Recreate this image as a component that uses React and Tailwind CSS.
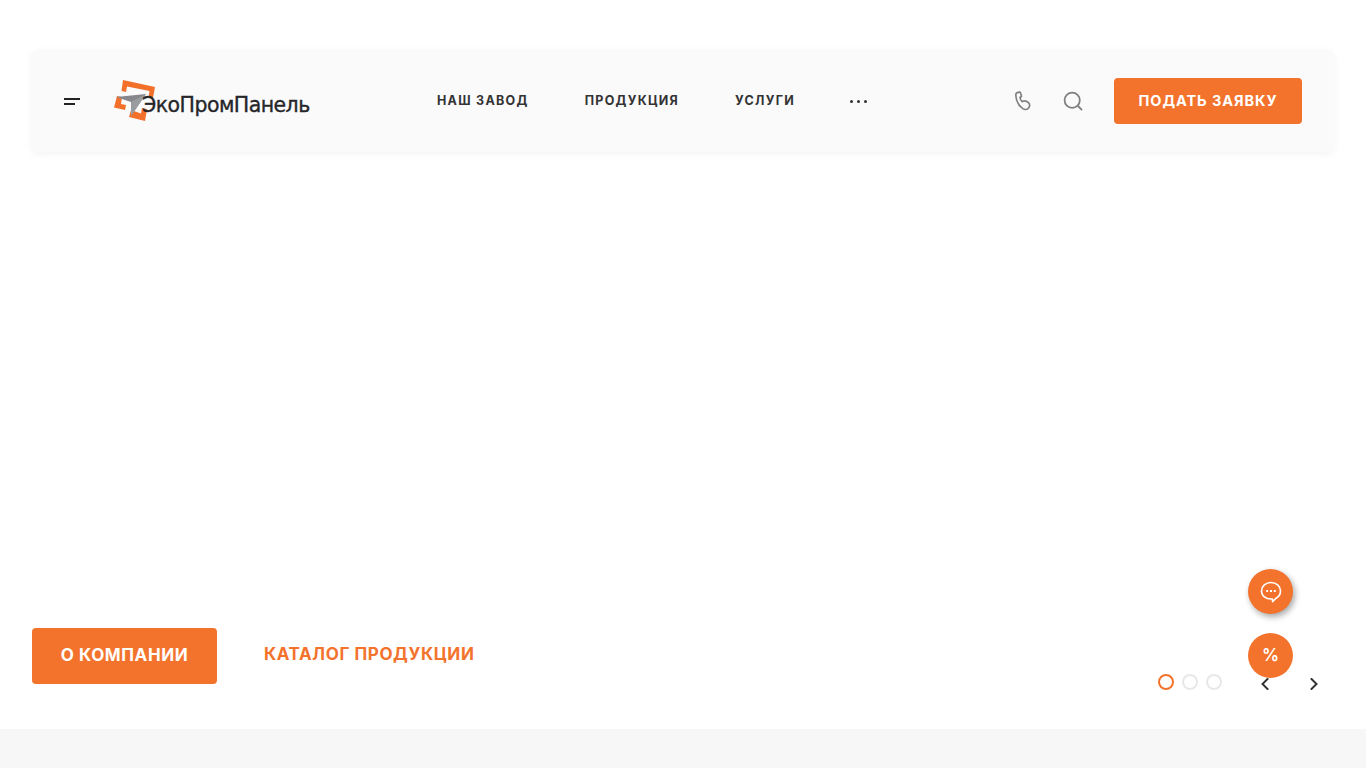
import React from 'react';

const font = 'font-["Inter","Liberation_Sans",sans-serif]';

function Logo() {
  return (
    <div className="flex items-center w-[204px] h-[40px] relative">
      <svg width="44" height="42" viewBox="0 0 44 42" className="shrink-0">
        {/* orange corners */}
        <path d="M9 0 L41 7 L39 18 L34.5 17 L35.5 11 L13 6.5 L12 12 L7.5 11 Z" fill="#f3702b" />
        <path d="M3 16 L8 17 L7 24 L12 25 L11 30 L0 27.5 Z" fill="#f3702b" />
        <path d="M17 30 L27 33.5 L28 28 L33 29 L31 41 L15 37 Z" fill="#f3702b" />
        {/* grey arrow */}
        <path d="M2 17 L32 14 L17 36 L17 22 Z" fill="#85878c" />
        <path d="M17 22 L32 14 L17 36 Z" fill="#9a9ca0" />
      </svg>
      <span className='absolute left-[28px] top-[11px] font-["DejaVu_Sans",sans-serif] text-[20.5px] leading-[26px] text-[#26262a] font-normal tracking-[-0.55px] [-webkit-text-stroke:0.35px_#26262a] whitespace-nowrap'>
        ЭкоПромПанель
      </span>
    </div>
  );
}

function PhoneIcon() {
  return (
    <svg width="18" height="20" viewBox="0 0 18 20" fill="none" stroke="#808080" strokeWidth="1.7" strokeLinecap="round" strokeLinejoin="round">
      <path d="M3.2 1.6 L5.4 1.2 C6 1.1 6.3 1.4 6.5 1.9 L7.4 4.6 C7.6 5.1 7.4 5.6 7 5.8 L6 6.5 C6.2 8.2 7 9.6 8.2 10.6 L9.6 10 C10.6 9.6 11.4 9.7 12.6 10.4 L14.6 11.8 C16 13 16 15.4 14.6 17 C13.2 18.6 10.6 18.8 8.8 17.6 C4.6 14.6 2 9.8 1.8 4 C1.8 2.8 2.2 1.9 3.2 1.6 Z" />
    </svg>
  );
}

function SearchIcon() {
  return (
    <svg width="20" height="20" viewBox="0 0 20 20" fill="none" stroke="#808080" strokeWidth="1.8" strokeLinecap="round">
      <circle cx="9.2" cy="9.2" r="7.6" />
      <path d="M15 15 L18.6 18.6" />
    </svg>
  );
}

function Chevron({ left }) {
  return (
    <svg width="8" height="12" viewBox="0 0 8 12" fill="none" stroke="#333" strokeWidth="2" strokeLinecap="square">
      <path d={left ? 'M6.5 1 L1.5 6 L6.5 11' : 'M1.5 1 L6.5 6 L1.5 11'} />
    </svg>
  );
}

export default function App() {
  const nav = ['НАШ ЗАВОД', 'ПРОДУКЦИЯ', 'УСЛУГИ'];

  return (
    <div className={`h-screen overflow-hidden bg-white flex flex-col relative ${font}`}>
      <div className="h-[729px] px-[32px] pt-[50px] flex flex-col">
        {/* Header */}
        <header className="h-[102px] w-[1302px] bg-[#fafafa] rounded-md shadow-[0_2px_8px_rgba(0,0,0,0.05)] flex items-center pl-[32px] pr-[32px]">
          <div className="w-[16px] flex flex-col gap-[3px] mr-[34px]">
            <span className="h-[2px] w-[16px] bg-[#222]"></span>
            <span className="h-[2px] w-[11px] bg-[#222]"></span>
          </div>
          <Logo />
          <nav className="ml-[119px] flex items-center gap-[56px]">
            {nav.map(item => (
              <a key={item} className="text-[12.5px] font-bold tracking-[1.28px] text-[#333] whitespace-nowrap">
                {item}
              </a>
            ))}
            <div className="flex gap-[4px] ml-[-1px]">
              <span className="w-[3px] h-[3px] rounded-full bg-[#333]"></span>
              <span className="w-[3px] h-[3px] rounded-full bg-[#333]"></span>
              <span className="w-[3px] h-[3px] rounded-full bg-[#333]"></span>
            </div>
          </nav>
          <div className="ml-auto flex items-center">
            <PhoneIcon />
            <div className="ml-[31px]"><SearchIcon /></div>
            <button className="ml-[31px] w-[188px] h-[46px] bg-[#f3732d] rounded-[4px] text-white text-[14.5px] font-bold tracking-[0.95px] whitespace-nowrap">
              ПОДАТЬ ЗАЯВКУ
            </button>
          </div>
        </header>

        {/* Hero bottom */}
        <div className="mt-auto mb-[45px] flex items-end">
          <div className="flex items-center">
            <button className="w-[185px] h-[56px] bg-[#f3732d] rounded-[4px] text-white text-[17px] font-bold tracking-[0.6px] whitespace-nowrap">
              О КОМПАНИИ
            </button>
            <a className="ml-[47px] mb-[2px] text-[#f3732d] text-[17px] font-bold tracking-[0.6px] whitespace-nowrap">
              КАТАЛОГ ПРОДУКЦИИ
            </a>
          </div>
          <div className="ml-auto flex items-center mr-[16px] mb-[-6px]">
            <div className="flex gap-[8px] mr-[39px]">
              <span className="w-[16px] h-[16px] rounded-full border-2 border-[#f3732d]"></span>
              <span className="w-[16px] h-[16px] rounded-full border-2 border-[#e8e8e8]"></span>
              <span className="w-[16px] h-[16px] rounded-full border-2 border-[#e8e8e8]"></span>
            </div>
            <div className="flex gap-[41px] mt-[4px]">
              <Chevron left />
              <Chevron />
            </div>
          </div>
        </div>
      </div>

      <div className="flex-1 bg-[#f7f7f7]"></div>

      {/* Floating buttons */}
      <div className="absolute left-[1248px] top-[569px] flex flex-col gap-[19px]">
        <button className="w-[45px] h-[45px] rounded-full bg-[#f3732d] shadow-[2px_3px_6px_rgba(0,0,0,0.35)] flex items-center justify-center">
          <svg width="22" height="22" viewBox="0 0 22 22" fill="none">
            <path d="M11 1.5 C5.8 1.5 1.5 5.2 1.5 10 C1.5 14.8 5.8 18 11 18 L12.4 18 L12.6 20.6 L16 17.2 C18.8 15.8 20.5 13.2 20.5 10 C20.5 5.2 16.2 1.5 11 1.5 Z" stroke="white" strokeWidth="1.6" strokeLinejoin="round" />
            <rect x="6.2" y="9" width="2" height="2" fill="white" />
            <rect x="10" y="9" width="2" height="2" fill="white" />
            <rect x="13.8" y="9" width="2" height="2" fill="white" />
          </svg>
        </button>
        <button className="w-[45px] h-[45px] rounded-full bg-[#f3732d] text-white text-[17px] font-semibold flex items-center justify-center">
          %
        </button>
      </div>
    </div>
  );
}
